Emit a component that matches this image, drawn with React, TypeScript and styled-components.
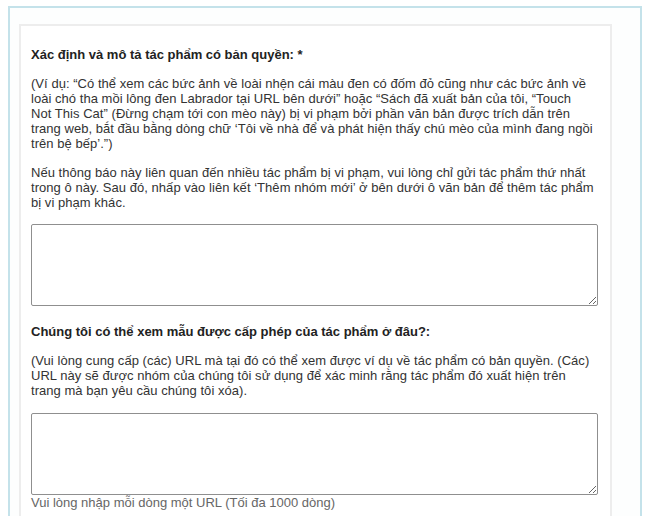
import React from "react";
import styled, { createGlobalStyle } from "styled-components";

const Global = createGlobalStyle`
  html, body { margin: 0; padding: 0; background: #ffffff; }
  body { font-family: "Liberation Sans", Arial, sans-serif; }
`;

const Outer = styled.div`
  margin: 6px 8px 0 8px;
  height: 510px;
  box-sizing: border-box;
  border: 2px solid #c4e2ea;
  border-bottom: none;
  padding: 16px 28px 0 9px;
  background: #fdfefe;
  overflow: hidden;
`;

const Panel = styled.div`
  border: 2px solid #ededed;
  border-bottom: none;
  background: #ffffff;
  padding: 21px 13px 0 10px;
  height: 600px;
  color: #333333;
`;

const Title = styled.div`
  font-size: 13px;
  line-height: 15px;
  font-weight: bold;
  color: #222;
  margin: 0 0 14px;
`;

const Para = styled.p<{ $gap?: number }>`
  font-size: 13px;
  line-height: 15px;
  letter-spacing: 0.04px;
  margin: 0 0 ${(p) => p.$gap ?? 14}px;
  color: #333;
  white-space: nowrap;
`;

const Area = styled.textarea<{ $after?: number }>`
  display: block;
  box-sizing: border-box;
  width: 567px;
  height: 82px;
  border: 1px solid #8f8f8f;
  border-radius: 2px;
  background: #fff;
  margin: 0 0 ${(p) => p.$after ?? 0}px;
  font-family: inherit;
`;

const Hint = styled.div`
  font-size: 13px;
  line-height: 15px;
  color: #666;
  margin-top: 0;
`;

export default function App() {
  return (
    <>
      <Global />
      <Outer>
        <Panel>
          <Title>Xác định và mô tả tác phẩm có bản quyền: *</Title>
          <Para>
            (Ví dụ: “Có thể xem các bức ảnh về loài nhện cái màu đen có đốm đỏ cũng như các bức ảnh về
            <br />
            loài chó tha mồi lông đen Labrador tại URL bên dưới” hoặc “Sách đã xuất bản của tôi, “Touch
            <br />
            Not This Cat” (Đừng chạm tới con mèo này) bị vi phạm bởi phần văn bản được trích dẫn trên
            <br />
            trang web, bắt đầu bằng dòng chữ ‘Tôi về nhà để và phát hiện thấy chú mèo của mình đang ngồi
            <br />
            trên bệ bếp’.”)
          </Para>
          <Para>
            Nếu thông báo này liên quan đến nhiều tác phẩm bị vi phạm, vui lòng chỉ gửi tác phẩm thứ nhất
            <br />
            trong ô này. Sau đó, nhấp vào liên kết ‘Thêm nhóm mới’ ở bên dưới ô văn bản để thêm tác phẩm
            <br />
            bị vi phạm khác.
          </Para>
          <Area $after={18} />
          <Title>Chúng tôi có thể xem mẫu được cấp phép của tác phẩm ở đâu?:</Title>
          <Para $gap={15}>
            (Vui lòng cung cấp (các) URL mà tại đó có thể xem được ví dụ về tác phẩm có bản quyền. (Các)
            <br />
            URL này sẽ được nhóm của chúng tôi sử dụng để xác minh rằng tác phẩm đó xuất hiện trên
            <br />
            trang mà bạn yêu cầu chúng tôi xóa).
          </Para>
          <Area />
          <Hint>Vui lòng nhập mỗi dòng một URL (Tối đa 1000 dòng)</Hint>
        </Panel>
      </Outer>
    </>
  );
}
